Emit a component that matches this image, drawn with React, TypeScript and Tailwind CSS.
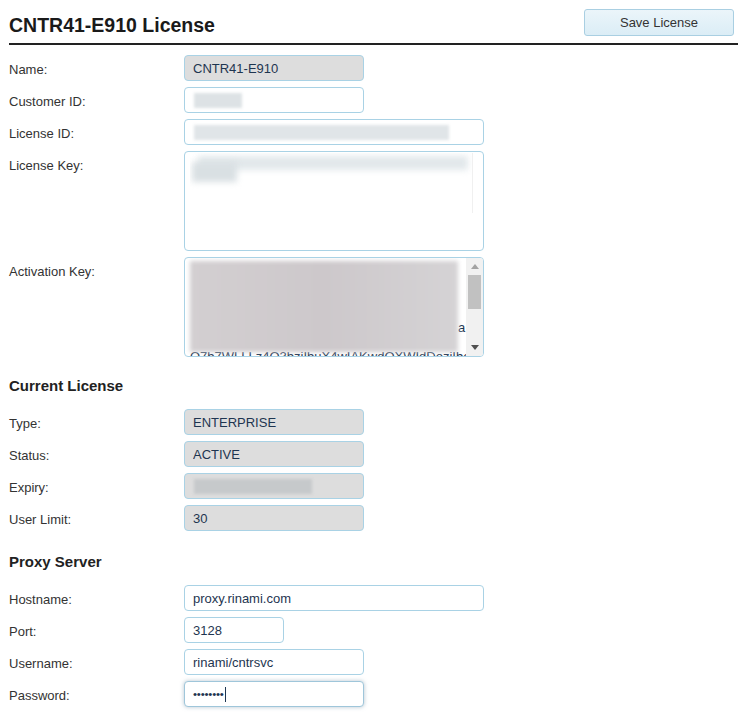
import React from "react";

const font = { fontFamily: '"Liberation Sans", Arial, sans-serif' };

function Label({ children }: { children: React.ReactNode }) {
  return (
    <div className="w-[175px] shrink-0 pt-[7px] text-[13px] leading-[16px] text-[#333]">
      {children}
    </div>
  );
}

function Row({ label, children, mb = "mb-[6px]" }: { label: string; children: React.ReactNode; mb?: string }) {
  return (
    <div className={`flex ${mb}`}>
      <Label>{label}</Label>
      {children}
    </div>
  );
}

function Field({
  value,
  width,
  gray,
}: {
  value?: string;
  width: string;
  gray?: boolean;
}) {
  return (
    <input
      readOnly
      value={value ?? ""}
      className={`${width} h-[26px] rounded-[4px] border border-[#a9d2e5] px-[8px] text-[13px] text-[#1e3550] outline-none ${
        gray ? "bg-[#dddddd]" : "bg-white"
      }`}
      style={font}
    />
  );
}

function BlurField({
  width,
  gray,
  blurW,
  blurColor,
}: {
  width: string;
  gray?: boolean;
  blurW: string;
  blurColor: string;
}) {
  return (
    <div
      className={`${width} h-[26px] rounded-[4px] border border-[#a9d2e5] pl-[9px] flex items-center overflow-hidden ${
        gray ? "bg-[#dddddd]" : "bg-white"
      }`}
    >
      <div className={`${blurW} h-[15px] ${blurColor} blur-[1.5px]`} />
    </div>
  );
}

function SectionHeading({ children, mt }: { children: React.ReactNode; mt: string }) {
  return (
    <div className={`${mt} mb-[14px] text-[15px] font-bold leading-[18px] text-[#222]`}>{children}</div>
  );
}

export default function App() {
  return (
    <div className="bg-white min-h-[717px]" style={font}>
      <div className="ml-[9px] w-[729px]">
        {/* Header */}
        <div className="flex h-[45px] justify-between border-b-2 border-[#222]">
          <h1 className="mt-[14px] text-[19.5px] font-bold leading-[23px] text-[#1a1a1a]">CNTR41-E910 License</h1>
          <button className="mt-[9px] mr-[4px] h-[27px] w-[150px] rounded-[3px] border border-[#a9cfe2] bg-gradient-to-b from-[#ebf5fa] to-[#dbedf6] text-[13px] text-[#333]">
            Save License
          </button>
        </div>

        <div className="mt-[10px]">
          <Row label="Name:">
            <Field value="CNTR41-E910" width="w-[180px]" gray />
          </Row>
          <Row label="Customer ID:">
            <BlurField width="w-[180px]" blurW="w-[48px]" blurColor="bg-[#dde2e5]" />
          </Row>
          <Row label="License ID:">
            <BlurField width="w-[300px]" blurW="w-[255px]" blurColor="bg-[#e0e5e8]" />
          </Row>
          <Row label="License Key:">
            <div className="w-[300px] h-[100px] rounded-[4px] border border-[#a9d2e5] bg-white pl-[5px] pt-[1px] overflow-hidden">
              <div className="relative w-[283px] h-[60px] overflow-hidden border-r border-[#f0f0f0]">
                <div className="mt-[3px] ml-[8px] w-[270px] h-[14px] bg-[#e2e8eb] blur-[3px]" />
                <div className="-mt-[8px] ml-[2px] w-[45px] h-[20px] bg-[#d9e0e3] blur-[3px]" />
              </div>
            </div>
          </Row>
          <Row label="Activation Key:">
            <div className="w-[300px] h-[100px] rounded-[4px] border border-[#a9d2e5] bg-white flex overflow-hidden">
              <div className="flex-1 pl-[5px] pt-[3px] overflow-hidden">
                <div className="flex items-end">
                  <div className="w-[268px] h-[91px] bg-gradient-to-r from-[#d3cfd1] via-[#cdc8cb] to-[#d5d3d5] blur-[2px]" />
                  <span className="mb-[16px] text-[13px] leading-[16px] text-[#1e3550]">a</span>
                </div>
                <div className="-mt-[3px] whitespace-nowrap text-[13px] leading-[16px] text-[#1e3550]">
                  Q7b7WLLLz4Q3bzjIbuX4wIAKwdQXWIdDozjIbe
                </div>
              </div>
              <div className="w-[17px] bg-[#f1f1f1] flex flex-col">
                <div className="h-[17px] flex items-center justify-center">
                  <svg width="8" height="5" viewBox="0 0 8 5">
                    <polygon points="4,0 8,5 0,5" fill="#a3a3a3" />
                  </svg>
                </div>
                <div className="mx-[2px] h-[34px] bg-[#c1c1c1]" />
                <div className="flex-1" />
                <div className="h-[17px] flex items-center justify-center">
                  <svg width="8" height="5" viewBox="0 0 8 5">
                    <polygon points="0,0 8,0 4,5" fill="#505050" />
                  </svg>
                </div>
              </div>
            </div>
          </Row>

          <SectionHeading mt="mt-[20px]">Current License</SectionHeading>
          <Row label="Type:">
            <Field value="ENTERPRISE" width="w-[180px]" gray />
          </Row>
          <Row label="Status:">
            <Field value="ACTIVE" width="w-[180px]" gray />
          </Row>
          <Row label="Expiry:">
            <BlurField width="w-[180px]" gray blurW="w-[118px]" blurColor="bg-[#c6c9cb]" />
          </Row>
          <Row label="User Limit:">
            <Field value="30" width="w-[180px]" gray />
          </Row>

          <SectionHeading mt="mt-[22px]">Proxy Server</SectionHeading>
          <Row label="Hostname:">
            <Field value="proxy.rinami.com" width="w-[300px]" />
          </Row>
          <Row label="Port:">
            <Field value="3128" width="w-[100px]" />
          </Row>
          <Row label="Username:">
            <Field value="rinami/cntrsvc" width="w-[180px]" />
          </Row>
          <Row label="Password:">
            <div className="w-[180px] h-[26px] rounded-[4px] border border-[#9fc6da] bg-white pl-[8px] flex items-center shadow-[0_0_4px_rgba(120,150,170,0.55)]">
              <span className="text-[11.5px] leading-[16px] tracking-[-0.2px] text-[#1e3550]">••••••••</span>
              <span className="ml-[1px] w-[1px] h-[15px] bg-[#1e3550]" />
            </div>
          </Row>
        </div>
      </div>
    </div>
  );
}
